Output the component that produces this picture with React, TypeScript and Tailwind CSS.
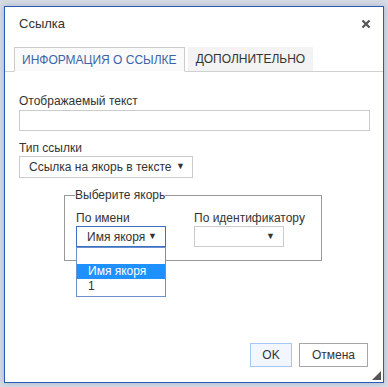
export default function App() {
  return (
    <div className="w-[388px] h-[387px] bg-[#d6dbe5] pl-[4px] pt-[6px] font-['Liberation_Sans',Arial,sans-serif] text-[#333]">
      <div className="relative w-[380px] h-[377px] bg-white border border-[#2b5cb5] shadow-[0_0_6px_rgba(80,100,150,0.35)] flex flex-col">
        <div className="flex items-center justify-between h-[33px] pl-[14px] pr-[12px]">
          <span className="text-[13px] text-[#333]">Ссылка</span>
          <svg width="10" height="10" viewBox="0 0 10 10">
            <path d="M1.5 1.5 L8.5 8.5 M8.5 1.5 L1.5 8.5" stroke="#555" strokeWidth="2.2" />
          </svg>
        </div>
        <div className="flex items-end h-[32px] pl-[9px] border-b border-[#d1d1d1]">
          <div className="h-[25px] px-[7px] flex items-center bg-[#fafafa] border border-[#ccc] border-b-white -mb-px text-[12px] text-[#3a65a8]">
            ИНФОРМАЦИЯ О ССЫЛКЕ
          </div>
          <div className="h-[24px] ml-[3px] px-[8px] flex items-center bg-[#f3f3f3] text-[12px] text-[#333]">
            ДОПОЛНИТЕЛЬНО
          </div>
        </div>
        <div className="flex flex-col pl-[14px] pr-[13px] pt-[22px]">
          <label className="text-[12px] leading-[14px]">Отображаемый текст</label>
          <div className="mt-[2px] h-[21px] w-full border border-[#c9cccf] bg-white" />
          <label className="text-[12px] leading-[14px] mt-[10px]">Тип ссылки</label>
          <div className="mt-[1px] h-[22px] w-[174px] border border-[#c9cccf] bg-white flex items-center justify-between pl-[9px] pr-[7px] text-[12px]">
            <span>Ссылка на якорь в тексте</span>
            <span className="text-[9px]">▼</span>
          </div>
          <fieldset className="relative mt-[10px] ml-[45px] w-[258px] h-[73px] border border-[#999] px-[11px] pt-0">
            <legend className="text-[12px] leading-[14px] px-0 ml-[-1px]">Выберите якорь</legend>
            <div className="flex gap-[28px] mt-[9px]">
              <div className="flex flex-col w-[90px]">
                <span className="text-[12px] leading-[14px]">По имени</span>
                <div className="relative mt-[1px] h-[21px] border border-[#3d6ebf] bg-white flex items-center justify-between pl-[10px] pr-[8px] text-[12px]">
                  <span>Имя якоря</span>
                  <span className="text-[9px]">▼</span>
                  <div className="absolute left-[-1px] top-[20px] w-[90px] h-[50px] border border-[#6b8fcf] bg-white flex flex-col text-[12px] leading-[15px] z-10">
                    <div className="h-[16px]" />
                    <div className="h-[15px] bg-[#1e90ff] text-white pl-[11px]">Имя якоря</div>
                    <div className="h-[15px] pl-[11px] text-[#333]">1</div>
                  </div>
                </div>
              </div>
              <div className="flex flex-col w-[90px]">
                <span className="text-[12px] leading-[14px] whitespace-nowrap">По идентификатору</span>
                <div className="mt-[1px] h-[21px] border border-[#c9cccf] bg-white flex items-center justify-end pr-[8px]">
                  <span className="text-[9px]">▼</span>
                </div>
              </div>
            </div>
          </fieldset>
        </div>
        <div className="mt-auto flex justify-end gap-[7px] pr-[15px] pb-[15px]">
          <button className="w-[42px] h-[24px] border border-[#a8c6f3] bg-[#f2f7ff] text-[12px] text-[#333]">OK</button>
          <button className="w-[69px] h-[24px] border border-[#a6a6a6] bg-white text-[12px] text-[#333]">Отмена</button>
        </div>
        <svg width="9" height="9" viewBox="0 0 9 9" className="absolute right-[2px] bottom-[2px]">
          <path d="M9 0 L9 9 L0 9 Z" fill="#555" />
        </svg>
      </div>
    </div>
  );
}
